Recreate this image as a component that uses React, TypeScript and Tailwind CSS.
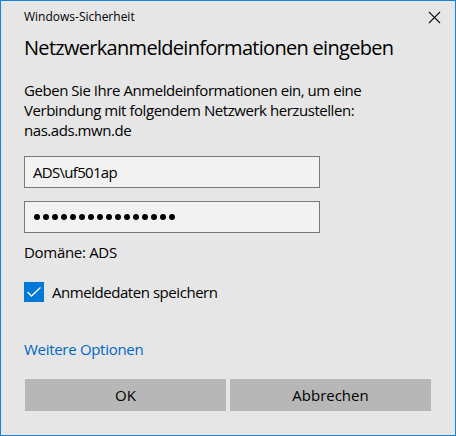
import { useState } from "react";

export default function App() {
  const [user, setUser] = useState("ADS\\uf501ap");
  const [remember, setRemember] = useState(true);

  return (
    <div
      className="w-[456px] h-[436px] border border-[#1883d7] bg-[#e6e6e6] text-black flex flex-col"
      style={{ fontFamily: '"Segoe UI", "Open Sans", "Noto Sans", sans-serif' }}
    >
      {/* Titelleiste */}
      <div className="flex items-center justify-between h-[32px] pl-[23px] pr-[13px]">
        <span className="text-[12px] leading-none">Windows-Sicherheit</span>
        <button className="w-[16px] h-[16px] flex items-center justify-center">
          <svg width="13" height="13" viewBox="0 0 13 13" fill="none" stroke="#111" strokeWidth="1.1">
            <path d="M1 1 L12 12 M12 1 L1 12" />
          </svg>
        </button>
      </div>

      <div className="flex flex-col px-[23px]">
        <h1 className="text-[20px] leading-[28px] mt-[1px] tracking-[-0.7px]">
          Netzwerkanmeldeinformationen eingeben
        </h1>

        <p className="text-[15px] leading-[20px] mt-[18px] tracking-[-0.45px]">
          Geben Sie Ihre Anmeldeinformationen ein, um eine
          <br />
          Verbindung mit folgendem Netzwerk herzustellen:
          <br />
          nas.ads.mwn.de
        </p>

        <input
          value={user}
          onChange={(e) => setUser(e.target.value)}
          className="mt-[16px] w-[296px] h-[32px] border border-[#7a7a7a] bg-[#f2f2f2] px-[8px] text-[15px] outline-none tracking-[-0.7px]"
        />
        <div className="mt-[13px] w-[296px] h-[32px] border border-[#7a7a7a] bg-[#f2f2f2] pl-[9px] flex items-center gap-[3px]">
          {Array.from({ length: 16 }).map((_, i) => (
            <span key={i} className="w-[6px] h-[6px] rounded-full bg-black" />
          ))}
        </div>

        <p className="text-[15px] leading-[20px] mt-[9px] tracking-[-0.3px]">Domäne: ADS</p>

        <label className="flex items-center gap-[8px] mt-[20px] cursor-pointer">
          <span
            onClick={() => setRemember(!remember)}
            className={`w-[20px] h-[20px] flex items-center justify-center ${remember ? "bg-[#0078d7]" : "border-2 border-black"}`}
          >
            {remember && (
              <svg width="16" height="12" viewBox="0 0 16 12" fill="none" stroke="white" strokeWidth="1.3">
                <path d="M1.5 6 L5.5 10 L14.5 1.5" />
              </svg>
            )}
          </span>
          <span className="text-[15px] leading-[20px] tracking-[-0.45px]">Anmeldedaten speichern</span>
        </label>

        <a href="#" className="text-[15px] leading-[20px] text-[#0066cc] mt-[37px] self-start tracking-[-0.3px]">
          Weitere Optionen
        </a>

        <div className="flex gap-[4px] mt-[20px] pl-[1px]">
          <button className="w-[201px] h-[32px] bg-[#b7b7b7] text-[15px]">OK</button>
          <button className="w-[201px] h-[32px] bg-[#b7b7b7] text-[15px]">Abbrechen</button>
        </div>
      </div>
    </div>
  );
}
